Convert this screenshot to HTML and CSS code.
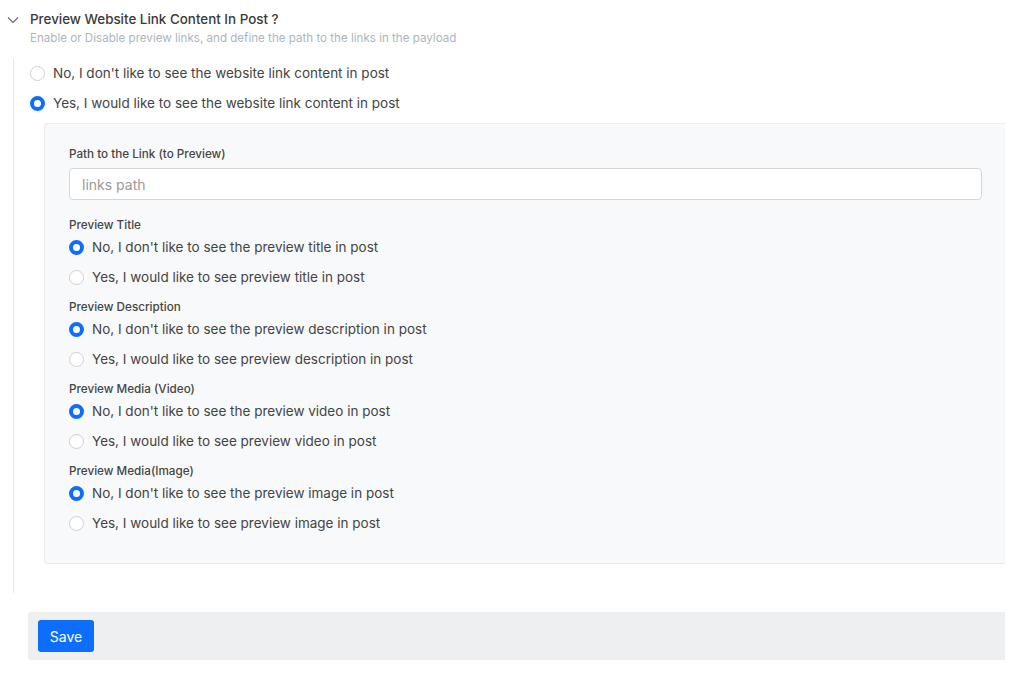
FILE: index.html
```html
<!DOCTYPE html>
<html lang="en">
<head>
    <meta charset="UTF-8">
    <meta name="viewport" content="width=device-width, initial-scale=1.0">
    <title>Preview Website Link Content</title>
    <link rel="stylesheet" href="styles.css">
</head>
<body>
    <div class="header">
        <svg class="chevron" width="12" height="8" viewBox="0 0 12 8">
            <path d="M1 1.5 L6 6.5 L11 1.5" fill="none" stroke="#666" stroke-width="1.1"/>
        </svg>
        <div>
            <div class="title">Preview Website Link Content In Post ?</div>
            <div class="subtitle">Enable or Disable preview links, and define the path to the links in the payload</div>
        </div>
    </div>

    <div class="section">
        <label class="radio-row">
            <input type="radio" name="preview">
            <span>No, I don't like to see the website link content in post</span>
        </label>
        <label class="radio-row">
            <input type="radio" name="preview" checked>
            <span>Yes, I would like to see the website link content in post</span>
        </label>

        <div class="panel">
            <div class="field-label">Path to the Link (to Preview)</div>
            <input type="text" class="text-input" placeholder="links path">

            <div class="group">
                <div class="field-label">Preview Title</div>
                <label class="radio-row">
                    <input type="radio" name="title" checked>
                    <span>No, I don't like to see the preview title in post</span>
                </label>
                <label class="radio-row">
                    <input type="radio" name="title">
                    <span>Yes, I would like to see preview title in post</span>
                </label>
            </div>

            <div class="group">
                <div class="field-label">Preview Description</div>
                <label class="radio-row">
                    <input type="radio" name="desc" checked>
                    <span>No, I don't like to see the preview description in post</span>
                </label>
                <label class="radio-row">
                    <input type="radio" name="desc">
                    <span>Yes, I would like to see preview description in post</span>
                </label>
            </div>

            <div class="group">
                <div class="field-label">Preview Media (Video)</div>
                <label class="radio-row">
                    <input type="radio" name="video" checked>
                    <span>No, I don't like to see the preview video in post</span>
                </label>
                <label class="radio-row">
                    <input type="radio" name="video">
                    <span>Yes, I would like to see preview video in post</span>
                </label>
            </div>

            <div class="group">
                <div class="field-label">Preview Media(Image)</div>
                <label class="radio-row">
                    <input type="radio" name="image" checked>
                    <span>No, I don't like to see the preview image in post</span>
                </label>
                <label class="radio-row">
                    <input type="radio" name="image">
                    <span>Yes, I would like to see preview image in post</span>
                </label>
            </div>
        </div>
    </div>

    <div class="save-bar">
        <button class="save-btn">Save</button>
    </div>
</body>
</html>
```

FILE: styles.css
```css
body {
    font-family: Inter, "Noto Sans", sans-serif;
    margin: 0;
    padding: 10px 0 0 0;
    background-color: white;
    color: #333;
}
.header {
    display: flex;
    align-items: flex-start;
}
.chevron {
    margin: 6px 11px 0 7px;
}
.title {
    font-size: 13.4px;
    font-weight: 500;
    line-height: 18px;
    color: #3a3a3a;
}
.subtitle {
    font-size: 11.6px;
    line-height: 16px;
    margin-top: 2px;
    color: #adb5bd;
}
.section {
    margin: 12px 19px 0 13px;
    border-left: 1px solid #e9e9e9;
    padding: 0 0 29px 16px;
}
.radio-row {
    display: flex;
    align-items: center;
    height: 30px;
    font-size: 13.5px;
    color: #444;
}
.radio-row input {
    appearance: none;
    width: 15px;
    height: 15px;
    margin: 0 8px 0 0;
    border: 1px solid #cfcfcf;
    border-radius: 50%;
    background-color: white;
    box-sizing: border-box;
}
.radio-row input:checked {
    border: 4px solid #0d6efd;
    background-color: white;
}
.panel {
    margin: 5px 0 0 14px;
    background-color: #f8f9fa;
    border: 1px solid #ebebeb;
    border-right: none;
    border-radius: 4px 0 0 4px;
    padding: 23px 23px 25px 24px;
}
.field-label {
    font-size: 11.7px;
    font-weight: 500;
    line-height: 14px;
    color: #454545;
}
.text-input {
    display: block;
    width: 100%;
    box-sizing: border-box;
    height: 32px;
    margin: 7px 0 18px 0;
    padding: 0 12px;
    border: 1px solid #d6d6d6;
    border-radius: 4px;
    font-family: inherit;
    font-size: 14px;
    background-color: white;
}
.text-input::placeholder {
    color: #9a9a9a;
}
.group + .group {
    margin-top: 8px;
}
.save-bar {
    margin: 19px 19px 0 28px;
    background-color: #eeeff1;
    border-radius: 3px 0 0 3px;
    padding: 8px 10px;
}
.save-btn {
    background-color: #0d6efd;
    color: white;
    border: none;
    border-radius: 3px;
    font-family: inherit;
    font-size: 14px;
    height: 32px;
    width: 56px;
    cursor: pointer;
}
```
